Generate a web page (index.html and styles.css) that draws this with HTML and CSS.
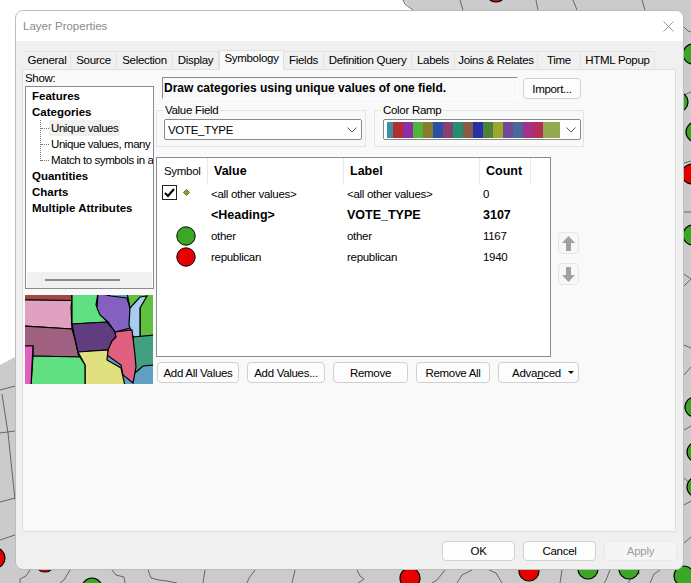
FILE: index.html
```html
<!DOCTYPE html>
<html lang="en">
<head>
<meta charset="UTF-8" />
<title>Layer Properties</title>
<link rel="stylesheet" href="styles.css">
</head>
<body>
<div class="desktop">
  <!-- the map behind the dialog -->
  <svg class="backdrop" width="691" height="583" viewBox="0 0 691 583">
    <polygon class="land" points="403,0 691,0 691,583 0,583 0,365 15,357 30,350 413,10"/>
    <g class="borders">
      <path d="M460 0l3 10M536 0l2 10M573 0l4 10M642 0l3 10M403 0l2 4 8 6"/>
      <path d="M0 390l15-4M2 394l6 39 7 67M0 433l15-2M0 502l15-4M0 540l15-5"/>
      <path d="M684 27l4 4 3 1M684 95l7-3M684 163l7-2M684 212h7M684 274l7 5-7 7M684 345l7 3M684 375l7-8M684 430l7-4M684 478l7 6M684 505l7-4M684 543l7-6"/>
      <path d="M30 570l-4 6-6 3v4M70 570l-6 10-4 3M112 570l4 5 8 2 1 6M148 570l3 8 8 2 8 1 10 2M205 570l-2 13M255 570l-6 8-2 5M295 570l-3 13M357 570l3 6 4 3-6 4M445 570l-8 10-5 3M472 570l-10 5-5 8M502 583l-6-10-7-3M562 570l-2 13M610 570l-4 10-2 3M640 573l-8 4-4 6M660 570l-6 4-4 9"/>
    </g>
    <g class="green">
      <circle cx="693" cy="54" r="10"/><circle cx="678" cy="102" r="10"/><circle cx="696" cy="132" r="10"/>
      <circle cx="693" cy="235" r="10"/><circle cx="695" cy="407" r="10"/><circle cx="697" cy="452" r="10"/>
      <circle cx="697" cy="487" r="10"/><circle cx="684" cy="576" r="10"/><circle cx="92" cy="588" r="10"/>
      <circle cx="588" cy="569" r="10"/><circle cx="629" cy="569" r="10"/>
    </g>
    <g class="red">
      <circle cx="692" cy="174" r="10"/><circle cx="-5" cy="558" r="10"/><circle cx="45" cy="562" r="10"/>
      <circle cx="410" cy="578" r="10"/><circle cx="529" cy="571" r="10"/><circle cx="496" cy="-8" r="10"/>
    </g>
  </svg>

  <div class="dialog">
    <div class="titlebar">
      <span class="title">Layer Properties</span>
      <svg class="close" width="11" height="11" viewBox="0 0 11 11"><path d="M0.5 0.5l10 10M10.5 0.5l-10 10"/></svg>
    </div>
    <div class="dialog-body">
      <div class="tabs">
        <span class="tab w47">General</span>
        <span class="tab w46">Source</span>
        <span class="tab w56">Selection</span>
        <span class="tab w46">Display</span>
        <span class="tab active">Symbology</span>
        <span class="tab w40">Fields</span>
        <span class="tab w88">Definition Query</span>
        <span class="tab w43">Labels</span>
        <span class="tab w83">Joins &amp; Relates</span>
        <span class="tab w43">Time</span>
        <span class="tab w74">HTML Popup</span>
      </div>
      <div class="panel">
        <div class="side">
          <div class="show-label">Show:</div>
          <div class="tree">
            <div class="tree-items">
              <div class="tree-head">Features</div>
              <div class="tree-head">Categories</div>
              <div class="tree-children">
                <div class="tree-child"><span class="selected">Unique values</span></div>
                <div class="tree-child">Unique values, many</div>
                <div class="tree-child">Match to symbols in a</div>
              </div>
              <div class="tree-head">Quantities</div>
              <div class="tree-head">Charts</div>
              <div class="tree-head">Multiple Attributes</div>
            </div>
            <div class="tree-scroll"><div class="tree-thumb"></div></div>
          </div>
          <svg class="preview" width="128" height="89" viewBox="0 0 128 89">
            <rect width="128" height="89" fill="#60a0c0"/>
            <g class="states">
              <polygon fill="#60c040" points="102,-2 130,-2 130,41 115,42 115,13 105,13"/>
              <polygon fill="#a04848" points="-2,-2 47,-2 47,5.5 -2,5"/>
              <polygon fill="#e0a0c0" points="-2,5 47,5.5 46,12 47,34 -2,31"/>
              <polygon fill="#60e080" points="47,-2 73,-2 71,10 75,17 82,27 47,29"/>
              <polygon fill="#8460c0" points="73,-2 86,1 102,3 105,13 105,33 90,37 83,27 75,20 72,13"/>
              <polygon fill="#a06080" points="-2,31 47,34 50,44 54,62 8,61 8,51 -2,51"/>
              <polygon fill="#603c80" points="47,29 82,27 87,33 90,37 91,42 87,46 85,52 83,55 53,57 50,44"/>
              <polygon fill="#a8ccf0" stroke="none" points="115,2 122,1 115,13 115,42 108,42 104,30 105,13"/>
              <polygon fill="#40a080" points="108,42 130,40 130,70 118,71 110,78"/>
              <polygon fill="#e06080" points="90,37 107,35 110,60 111,72 108,88 98,80 96,70 82,60 83,55 87,46 91,42"/>
              <polygon fill="#e0e080" points="53,57 83,55 82,65 96,73 100,91 60,91 60,70"/>
              <polygon fill="#60e080" points="8,61 55,62 60,70 60,91 6,91"/>
              <polygon fill="#e060c0" points="-2,51 8,51 6,91 -2,91"/>
            </g>
          </svg>
        </div>

        <div class="main">
          <div class="head-row">
            <div class="description">Draw categories using unique values of one field.</div>
            <button class="btn import">Import...</button>
          </div>
          <div class="field-row">
            <fieldset class="group value-group">
              <legend>Value Field</legend>
              <div class="select">
                <span class="select-text">VOTE_TYPE</span>
                <svg class="chevron" width="10" height="6" viewBox="0 0 10 6"><path d="M0.5 0.5l4.5 4.5 4.5-4.5"/></svg>
              </div>
            </fieldset>
            <fieldset class="group ramp-group">
              <legend>Color Ramp</legend>
              <div class="select">
                <div class="ramp">
                  <i class="c1"></i><i class="c2"></i><i class="c3"></i><i class="c4"></i><i class="c5"></i><i class="c6"></i>
                  <i class="c7"></i><i class="c8"></i><i class="c9"></i><i class="c10"></i><i class="c11"></i><i class="c12"></i>
                  <i class="c13"></i><i class="c14"></i><i class="c15"></i><i class="c16"></i><i class="c17"></i>
                </div>
                <svg class="chevron" width="10" height="6" viewBox="0 0 10 6"><path d="M0.5 0.5l4.5 4.5 4.5-4.5"/></svg>
              </div>
            </fieldset>
          </div>
          <div class="table-row">
            <div class="table">
              <div class="thead">
                <span class="th th-symbol">Symbol</span>
                <span class="th th-bold">Value</span>
                <span class="th th-bold">Label</span>
                <span class="th th-bold th-count">Count</span>
              </div>
              <div class="tr">
                <span class="symbol-cell">
                  <span class="check"><svg width="11" height="10" viewBox="0 0 11 10"><path d="M1 5l3 3 6-7"/></svg></span>
                  <svg class="diamond" width="7" height="7" viewBox="0 0 7 7"><polygon points="3.5,0.5 6.5,3.5 3.5,6.5 0.5,3.5"/></svg>
                </span>
                <span>&lt;all other values&gt;</span><span>&lt;all other values&gt;</span><span>0</span>
              </div>
              <div class="tr tr-bold">
                <span class="symbol-cell"></span>
                <span>&lt;Heading&gt;</span><span>VOTE_TYPE</span><span>3107</span>
              </div>
              <div class="tr">
                <span class="symbol-cell"><svg class="dot" width="20" height="20" viewBox="0 0 20 20"><circle cx="10" cy="10" r="9.2" fill="#3aa824"/></svg></span>
                <span>other</span><span>other</span><span>1167</span>
              </div>
              <div class="tr">
                <span class="symbol-cell"><svg class="dot" width="20" height="20" viewBox="0 0 20 20"><circle cx="10" cy="10" r="9.2" fill="#e80000"/></svg></span>
                <span>republican</span><span>republican</span><span>1940</span>
              </div>
            </div>
            <div class="move-buttons">
              <button class="btn move"><svg width="13" height="15" viewBox="0 0 13 15"><polygon points="6.5,0 13,7 9,7 9,15 4,15 4,7 0,7"/></svg></button>
              <button class="btn move"><svg width="13" height="15" viewBox="0 0 13 15"><polygon points="6.5,15 13,8 9,8 9,0 4,0 4,8 0,8"/></svg></button>
            </div>
          </div>
          <div class="action-row">
            <button class="btn w82">Add All Values</button>
            <button class="btn w78">Add Values...</button>
            <button class="btn w75">Remove</button>
            <button class="btn w74">Remove All</button>
            <button class="btn advanced">Adva<u>n</u>ced<span class="caret"></span></button>
          </div>
        </div>
      </div>
      <div class="footer">
        <button class="btn foot">OK</button>
        <button class="btn foot">Cancel</button>
        <button class="btn foot disabled">Apply</button>
      </div>
    </div>
  </div>
</div>
</body>
</html>
```

FILE: styles.css
```css
* {
  box-sizing: border-box;
}
html, body {
  margin: 0;
  padding: 0;
  overflow: hidden;
}
body {
  font-family: "Liberation Sans", Arial, sans-serif;
  font-size: 11.5px;
  letter-spacing: -0.3px;
  color: #000;
  background: #fff;
}
.desktop {
  position: relative;
  width: 691px;
  height: 583px;
  padding: 10px 0 0 15px;
  overflow: hidden;
}
.backdrop {
  position: absolute;
  left: 0;
  top: 0;
}
.land {
  fill: #cbcbcb;
}
.borders path {
  fill: none;
  stroke: #666;
  stroke-width: 1;
}
.green circle,
.red circle {
  stroke: #000;
  stroke-width: 1.2;
}
.green circle {
  fill: #3aa824;
}
.red circle {
  fill: #e80000;
}

/* dialog */
.dialog {
  position: relative;
  width: 669px;
  height: 560px;
  border: 1px solid #bdbdbd;
  border-radius: 8px;
  background: #f0f0f0;
  overflow: hidden;
}
.titlebar {
  height: 30px;
  background: #fff;
  display: flex;
  align-items: center;
  justify-content: space-between;
  padding: 0 9px 0 7px;
}
.title {
  color: #8a8a8a;
  letter-spacing: 0;
}
.close path {
  stroke: #9a9a9a;
  stroke-width: 1;
  fill: none;
}
.dialog-body {
  padding: 9px 7px 0 6px;
}

/* tabs */
.tabs {
  display: flex;
  align-items: flex-end;
  height: 19px;
  padding-left: 2px;
}
.tab {
  height: 18px;
  line-height: 16px;
  text-align: center;
  background: #f0f0f0;
  border: 1px solid #e4e4e4;
  border-bottom: none;
  border-left: none;
  white-space: nowrap;
}
.tab.active {
  width: 65px;
  height: 20px;
  line-height: 14px;
  background: #f9f9f9;
  border: 1px solid #e0e0e0;
  border-bottom: none;
  position: relative;
  z-index: 1;
  margin-bottom: -1px;
}
.w40 { width: 40px; }
.w43 { width: 43px; }
.w46 { width: 46px; }
.w47 { width: 47px; }
.w56 { width: 56px; }
.w74 { width: 74px; }
.w83 { width: 83px; }
.w88 { width: 88px; }
.w75 { width: 75px; }
.w78 { width: 78px; }
.w82 { width: 82px; }
.panel {
  height: 463px;
  background: #f9f9f9;
  border: 1px solid #e0e0e0;
  display: flex;
  padding: 2px 0 0 2px;
}

/* left column */
.side {
  width: 129px;
  flex-shrink: 0;
}
.show-label {
  height: 14px;
  line-height: 13px;
}
.tree {
  width: 129px;
  height: 203px;
  border: 1px solid #8a8a8e;
  background: #fff;
  display: flex;
  flex-direction: column;
  justify-content: space-between;
}
.tree-items {
  padding-top: 1px;
  overflow: hidden;
}
.tree-head {
  height: 16px;
  line-height: 16px;
  font-weight: bold;
  letter-spacing: 0;
  padding-left: 6px;
  white-space: nowrap;
}
.tree-children {
  margin-left: 14px;
  height: 48px;
  position: relative;
}
.tree-children::before {
  content: "";
  position: absolute;
  left: 0;
  top: 0;
  height: 41px;
  border-left: 1px dotted #777;
}
.tree-child {
  height: 16px;
  line-height: 16px;
  padding-left: 11px;
  letter-spacing: -0.42px;
  white-space: nowrap;
  position: relative;
}
.tree-child::before {
  content: "";
  position: absolute;
  left: 1px;
  top: 8px;
  width: 8px;
  border-top: 1px dotted #777;
}
.selected {
  background: #f0f0f0;
  display: inline-block;
  margin-left: -2px;
  padding: 0 2px;
}
.tree-scroll {
  height: 16px;
  margin: 0 1px;
  background: #f0f0f0;
  display: flex;
  align-items: center;
  padding-left: 18px;
}
.tree-thumb {
  width: 75px;
  height: 2px;
  background: #888;
}
.preview {
  display: block;
  margin-top: 6px;
}
.states polygon {
  stroke: #000;
  stroke-width: 1.2;
}

/* right column */
.main {
  margin-left: 2px;
  flex: 1;
  display: flex;
  flex-direction: column;
}
.head-row {
  display: flex;
  align-items: flex-start;
  padding: 5px 0 0 6px;
  height: 31px;
}
.description {
  width: 356px;
  height: 22px;
  line-height: 21px;
  padding-left: 1px;
  border-top: 1px solid #8a8a8e;
  border-left: 1px solid #8a8a8e;
  border-right: 1px solid #fff;
  border-bottom: 1px solid #fff;
  font-weight: bold;
  font-size: 12px;
  letter-spacing: 0;
  white-space: nowrap;
}
.btn {
  font-family: inherit;
  font-size: 11.5px;
  letter-spacing: -0.3px;
  color: #000;
  height: 21px;
  padding: 0;
  background: #fdfdfd;
  border: 1px solid #d0d0d0;
  border-radius: 4px;
}
.import {
  width: 58px;
  margin: 1px 0 0 5px;
}
.field-row {
  display: flex;
  gap: 8px;
}
.group {
  margin: 0;
  padding: 0 3px 0 7px;
  height: 44px;
  border: 1px solid #e4e4e4;
  min-width: 0;
}
.group legend {
  padding: 0 2px;
  margin-left: -1px;
  line-height: 14px;
}
.value-group {
  width: 210px;
}
.ramp-group {
  width: 210px;
  padding: 0 2px 0 8px;
}
.ramp-group legend {
  margin-left: -2px;
}
.select {
  height: 21px;
  background: #fff;
  border: 1px solid #8a8a8e;
  border-radius: 2px;
  display: flex;
  align-items: center;
  justify-content: space-between;
  padding: 0 4px 0 3px;
  margin-top: 2px;
}
.chevron path {
  fill: none;
  stroke: #555;
  stroke-width: 1;
}
.ramp {
  display: flex;
  height: 16px;
}
.ramp i {
  width: 10px;
  display: block;
}
.ramp .c1 { width: 6px; background: #3f8fa8; }
.ramp .c2 { background: #b03030; }
.ramp .c3 { background: #8d2da8; }
.ramp .c4 { background: #4fb53a; }
.ramp .c5 { background: #8a7a30; }
.ramp .c6 { background: #2850a8; }
.ramp .c7 { background: #8a3f70; }
.ramp .c8 { background: #209070; }
.ramp .c9 { background: #8a5a48; }
.ramp .c10 { background: #2830a8; }
.ramp .c11 { background: #508038; }
.ramp .c12 { background: #98a828; }
.ramp .c13 { background: #704a98; }
.ramp .c14 { background: #486a9a; }
.ramp .c15 { background: #a83088; }
.ramp .c16 { background: #b03058; }
.ramp .c17 { width: 17px; background: #94a850; }
.table-row {
  display: flex;
  margin-top: 10px;
}
.table {
  width: 395px;
  height: 200px;
  background: #fff;
  border: 1px solid #8a8a8e;
}
.thead {
  display: grid;
  grid-template-columns: 51px 136px 136px 51px;
  height: 25px;
}
.th {
  line-height: 27px;
  border-right: 1px solid #e8e8e8;
  padding-left: 7px;
}
.th-bold {
  font-weight: bold;
  font-size: 12.5px;
  letter-spacing: 0;
  padding-left: 6px;
}
.th-symbol {
  padding-left: 7px;
}
.tr {
  display: grid;
  grid-template-columns: 54px 136px 136px 1fr;
  height: 21px;
  align-items: center;
  white-space: nowrap;
}
.tr-bold {
  font-weight: bold;
  font-size: 12.5px;
  letter-spacing: 0;
}
.symbol-cell {
  display: flex;
  align-items: center;
  height: 21px;
}
.check {
  width: 15px;
  height: 15px;
  margin: 0 0 2px 5px;
  border: 1px solid #222;
  display: flex;
  align-items: center;
  justify-content: center;
}
.check path {
  fill: none;
  stroke: #000;
  stroke-width: 2;
}
.diamond {
  margin: 0 0 2px 6px;
}
.diamond polygon {
  fill: #a89a10;
  stroke: #333;
  stroke-width: 0.7;
}
.dot {
  margin-left: 19px;
}
.dot circle {
  stroke: #000;
  stroke-width: 1;
}
.move-buttons {
  display: flex;
  flex-direction: column;
  gap: 9px;
  padding: 75px 0 0 7px;
}
.move {
  width: 21px;
  height: 22px;
  border-color: #e6e6e6;
  background: #f7f7f7;
  display: flex;
  align-items: center;
  justify-content: center;
}
.move polygon {
  fill: #a0a0a0;
}
.action-row {
  display: flex;
  margin-top: 5px;
  padding-left: 1px;
  gap: 8px;
}
.advanced {
  width: 81px;
  position: relative;
  padding-right: 4px;
}
.caret {
  position: absolute;
  right: 4px;
  top: 8px;
  border-left: 3px solid transparent;
  border-right: 3px solid transparent;
  border-top: 3px solid #111;
}

/* footer */
.footer {
  display: flex;
  justify-content: flex-end;
  gap: 8px;
  padding-top: 9px;
  margin-right: -1px;
}
.foot {
  width: 73px;
  height: 20px;
}
.disabled {
  color: #a0a0a0;
  background: #f5f5f5;
  border-color: #e8e8e8;
}
```
